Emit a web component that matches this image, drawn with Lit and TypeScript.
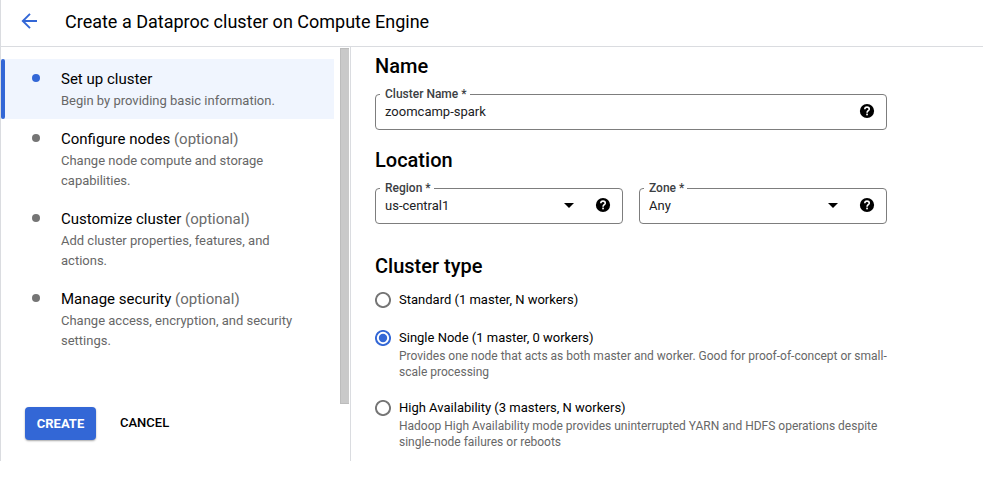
import { LitElement, html, css, svg, nothing } from "lit";
import { customElement, property } from "lit/decorators.js";
import { classMap } from "lit/directives/class-map.js";

interface Step {
  title: string;
  optional: boolean;
  text: string;
  current: boolean;
}

interface ClusterType {
  label: string;
  hint: string;
  checked: boolean;
}

const steps: Step[] = [
  { title: "Set up cluster", optional: false, text: "Begin by providing basic information.", current: true },
  { title: "Configure nodes", optional: true, text: "Change node compute and storage capabilities.", current: false },
  { title: "Customize cluster", optional: true, text: "Add cluster properties, features, and actions.", current: false },
  { title: "Manage security", optional: true, text: "Change access, encryption, and security settings.", current: false },
];

const clusterTypes: ClusterType[] = [
  { label: "Standard (1 master, N workers)", hint: "", checked: false },
  {
    label: "Single Node (1 master, 0 workers)",
    hint: "Provides one node that acts as both master and worker. Good for proof-of-concept or small-scale processing",
    checked: true,
  },
  {
    label: "High Availability (3 masters, N workers)",
    hint: "Hadoop High Availability mode provides uninterrupted YARN and HDFS operations despite single-node failures or reboots",
    checked: false,
  },
];

@customElement("outlined-field")
export class OutlinedField extends LitElement {
  @property() label = "";
  @property() value = "";
  @property({ type: Boolean }) select = false;

  static styles = css`
    :host {
      display: block;
      flex: 1;
      min-width: 0;
    }
    .box {
      box-sizing: border-box;
      height: 36px;
      border: 1px solid #7d7d7d;
      border-radius: 4px;
      padding: 0 11px 0 9px;
      position: relative;
      display: flex;
      align-items: center;
    }
    .label {
      position: absolute;
      left: 4px;
      top: -8px;
      padding: 0 3px 0 5px;
      background: #fff;
      font-size: 12px;
      font-weight: 500;
      line-height: 14px;
      color: #3c4043;
    }
    .value {
      flex: 1;
      font-size: 13px;
      line-height: 20px;
      color: #202124;
    }
    .arrow {
      width: 10px;
      height: 5px;
      margin-right: 21px;
      margin-top: -1px;
    }
    .help {
      width: 16px;
      height: 16px;
      margin-top: -2px;
    }
  `;

  render() {
    return html`<div class="box">
      <span class="label">${this.label}</span>
      <span class="value">${this.value}</span>
      ${this.select
        ? html`<svg class="arrow" viewBox="0 0 10 5"><path d="M0 0h10L5 5z" /></svg>`
        : nothing}
      <svg class="help" viewBox="0 0 16 16">
        <circle cx="8" cy="8" r="7.1" />
        <path
          d="M5.8 6.300C5.800 4.900 6.700 4.100 8 4.100s2.250.8 2.250 2.050c0 1.500-2.200 1.700-2.200 3.550"
          fill="none"
          stroke="#fff"
          stroke-width="1.6"
        />
        <rect x="7.2" y="10.6" width="1.7" height="1.7" fill="#fff" />
      </svg>
    </div>`;
  }
}

@customElement("app-root")
export class AppRoot extends LitElement {
  static styles = css`
    :host {
      display: block;
      height: 488px;
      background: #fff;
      font-family: Roboto, sans-serif;
      color: #000;
    }
    .panel {
      box-sizing: border-box;
      height: 461px;
      border-left: 1px solid #dadce0;
      display: flex;
      flex-direction: column;
    }
    .header {
      box-sizing: border-box;
      height: 47px;
      flex: none;
      border-bottom: 1px solid #dadce0;
      padding: 0 0 2px 20px;
      display: flex;
      align-items: center;
      gap: 28px;
    }
    .back {
      width: 16px;
      height: 16px;
      margin-top: -2px;
    }
    .title {
      margin: 0;
      font-size: 18px;
      font-weight: 400;
      line-height: 24px;
    }
    .body {
      flex: 1;
      min-height: 0;
      display: flex;
    }
    .side {
      box-sizing: border-box;
      width: 350px;
      border-right: 1px solid #dadce0;
      display: grid;
      grid-template-columns: 333px 9px;
      column-gap: 6px;
      grid-template-rows: 357px 1fr;
    }
    .steps {
      padding-top: 12px;
    }
    .track {
      box-sizing: border-box;
      margin-top: 1px;
      background: #c9c9c9;
      border: 1px solid #bcbcbc;
      border-right: none;
    }
    .step {
      box-sizing: border-box;
      padding: 10px 32px 10px 31px;
      display: flex;
      align-items: flex-start;
      gap: 21px;
    }
    .step.current {
      padding-left: 0;
      background: #f0f5fe;
    }
    .step.current::before {
      content: "";
      width: 4px;
      margin: -10px 6px -10px 0;
      align-self: stretch;
      border-radius: 2px;
      background: #3367d6;
    }
    .dot {
      flex: none;
      width: 8px;
      height: 8px;
      margin-top: 5px;
      border-radius: 50%;
      background: #757575;
    }
    .current .dot {
      background: #3367d6;
    }
    .step-title {
      font-size: 15px;
      line-height: 20px;
    }
    .optional {
      color: #6b6b6b;
    }
    .step-text {
      margin-top: 2px;
      margin-bottom: -2px;
      font-size: 13px;
      line-height: 20px;
      color: #676767;
    }
    .actions {
      grid-column: 1 / -1;
      padding: 3px 0 0 24px;
      display: flex;
      align-items: flex-start;
      gap: 24px;
    }
    .button {
      border: none;
      margin: 0;
      padding: 0;
      background: none;
      font: 500 13px/32px Roboto, sans-serif;
      color: #000;
    }
    .primary {
      width: 71px;
      height: 33px;
      line-height: 33px;
      border-radius: 4px;
      background: #3367d6;
      color: #fff;
      font-weight: 700;
      box-shadow: 0 1px 2px rgba(0, 0, 0, 0.35);
    }
    .form {
      width: 512px;
      padding-left: 24px;
    }
    .heading {
      margin: 0;
      font-size: 20px;
      font-weight: 500;
      line-height: 24px;
    }
    .name {
      padding-top: 7px;
    }
    .location {
      padding-top: 18px;
    }
    .types {
      padding-top: 30px;
    }
    .fields {
      margin-top: 16px;
      display: flex;
      gap: 16px;
    }
    .radio {
      display: flex;
      gap: 8px;
    }
    .radio + .radio {
      margin-top: 18px;
    }
    .heading + .radio {
      margin-top: 12px;
    }
    .ring {
      flex: none;
      width: 16px;
      height: 16px;
      margin-top: 2px;
    }
    .radio-label {
      font-size: 13px;
      line-height: 20px;
    }
    .hint {
      font-size: 12px;
      line-height: 16px;
      color: #676767;
    }
  `;

  private renderStep(step: Step) {
    return html`<div class=${classMap({ step: true, current: step.current })}>
      <span class="dot"></span>
      <div>
        <div class="step-title">
          ${step.title}${step.optional ? html` <span class="optional">(optional)</span>` : nothing}
        </div>
        <div class="step-text">${step.text}</div>
      </div>
    </div>`;
  }

  private renderType(type: ClusterType) {
    const color = type.checked ? "#3367d6" : "#757575";
    return html`<div class="radio">
      <svg class="ring" viewBox="0 0 16 16">
        <circle cx="8" cy="8" r="7.1" fill="none" stroke=${color} stroke-width="1.9" />
        ${type.checked ? svg`<circle cx="8" cy="8" r="4.2" fill=${color} />` : nothing}
      </svg>
      <div>
        <div class="radio-label">${type.label}</div>
        ${type.hint ? html`<div class="hint">${type.hint}</div>` : nothing}
      </div>
    </div>`;
  }

  render() {
    return html`<div class="panel">
      <header class="header">
        <svg class="back" viewBox="0 0 16 16" fill="none" stroke="#3367d6" stroke-width="1.9">
          <path d="M16 8H2M9 .8L1.8 8 9 15.200" />
        </svg>
        <h1 class="title">Create a Dataproc cluster on Compute Engine</h1>
      </header>
      <div class="body">
        <aside class="side">
          <nav class="steps">${steps.map((step) => this.renderStep(step))}</nav>
          <div class="track"></div>
          <div class="actions">
            <button class="button primary">CREATE</button>
            <button class="button">CANCEL</button>
          </div>
        </aside>
        <main class="form">
          <section class="name">
            <h2 class="heading">Name</h2>
            <div class="fields">
              <outlined-field label="Cluster Name *" value="zoomcamp-spark"></outlined-field>
            </div>
          </section>
          <section class="location">
            <h2 class="heading">Location</h2>
            <div class="fields">
              <outlined-field label="Region *" value="us-central1" select></outlined-field>
              <outlined-field label="Zone *" value="Any" select></outlined-field>
            </div>
          </section>
          <section class="types">
            <h2 class="heading">Cluster type</h2>
            ${clusterTypes.map((type) => this.renderType(type))}
          </section>
        </main>
      </div>
    </div>`;
  }
}
